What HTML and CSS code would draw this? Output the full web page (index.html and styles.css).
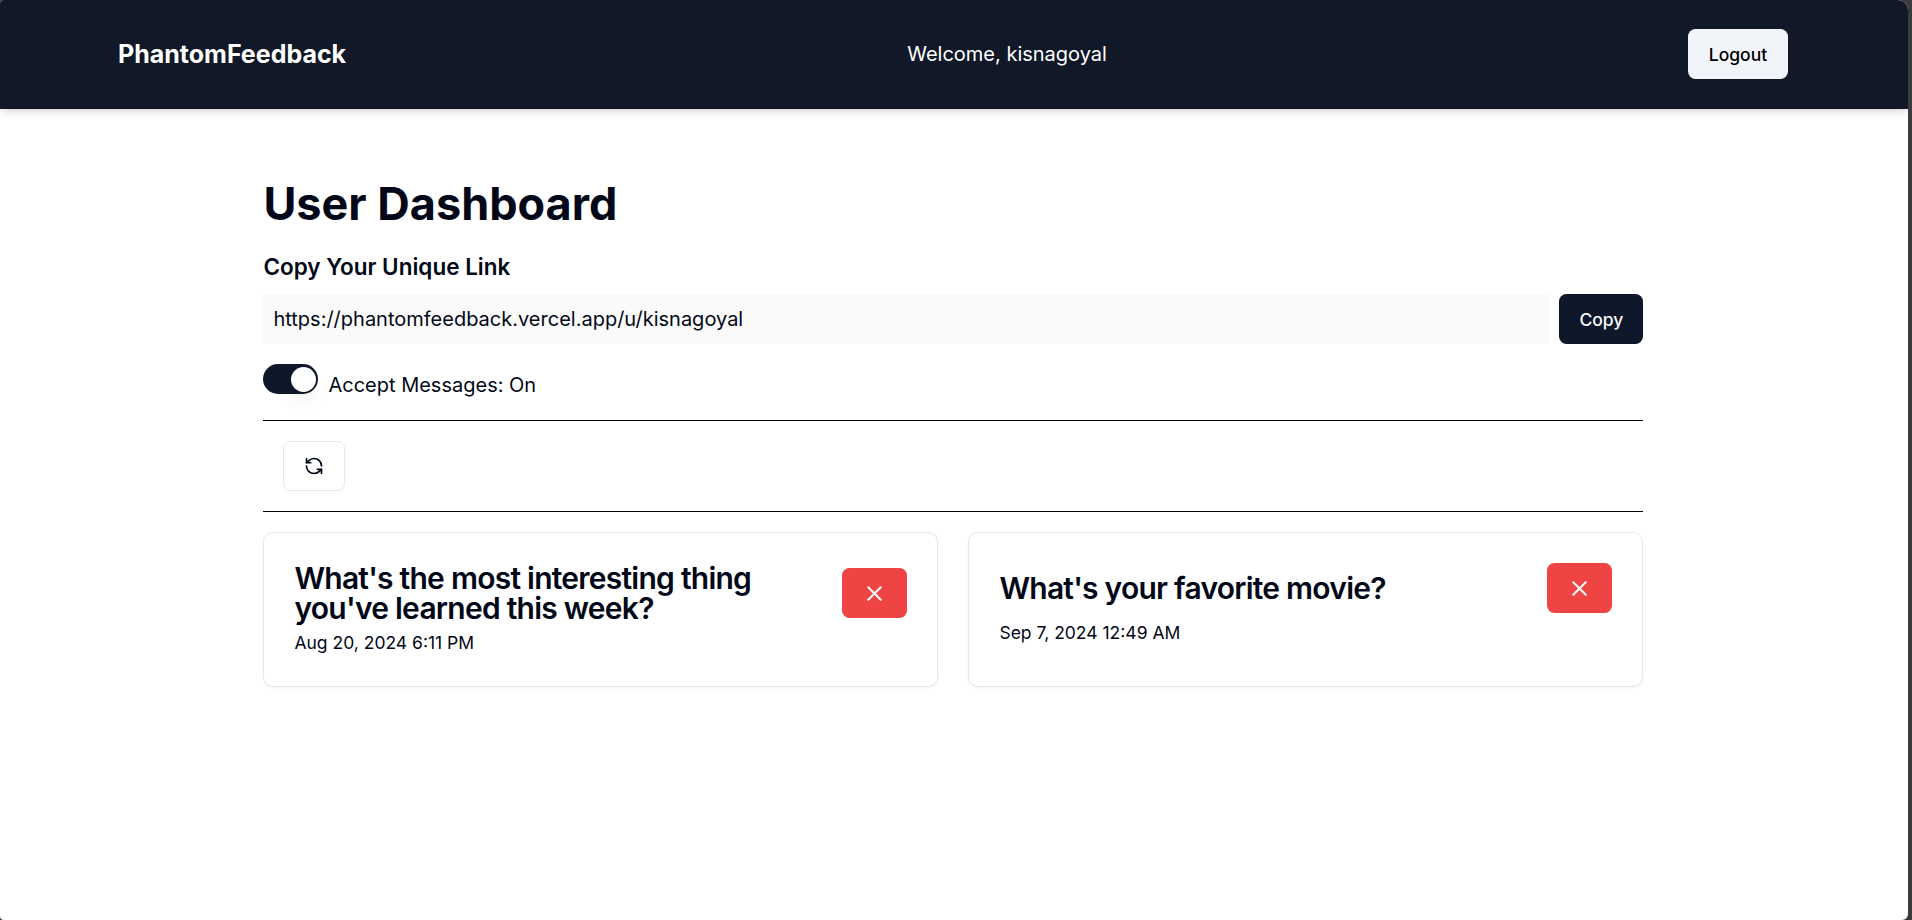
FILE: index.html
```html
<!DOCTYPE html>
<html lang="en">
<head>
<meta charset="utf-8">
<title>PhantomFeedback</title>
<link rel="stylesheet" href="styles.css">
</head>
<body>
<div class="page">
  <nav class="nav">
    <div class="nav-inner">
      <a class="brand">PhantomFeedback</a>
      <span class="welcome">Welcome, kisnagoyal</span>
      <button class="btn btn-light">Logout</button>
    </div>
  </nav>
  <main class="dashboard">
    <h1 class="title">User Dashboard</h1>
    <section>
      <h2 class="subtitle">Copy Your Unique Link</h2>
      <div class="link-row">
        <input class="link-input" type="text" value="https://phantomfeedback.vercel.app/u/kisnagoyal" disabled>
        <button class="btn btn-dark">Copy</button>
      </div>
    </section>
    <div class="switch-row">
      <button class="switch" role="switch" aria-checked="true" aria-label="Accept messages"><span class="thumb"></span></button>
      <span class="switch-label">Accept Messages: On</span>
    </div>
    <div class="toolbar">
      <button class="btn btn-outline" aria-label="Refresh">
        <svg class="icon" viewBox="0 0 24 24"><path d="M21 12a9 9 0 0 0-9-9 9.75 9.75 0 0 0-6.74 2.74L3 8"/><path d="M3 3v5h5"/><path d="M3 12a9 9 0 0 0 9 9 9.75 9.75 0 0 0 6.74-2.74L21 16"/><path d="M16 16h5v5"/></svg>
      </button>
    </div>
    <div class="cards">
      <article class="card">
        <div class="card-head">
          <h3 class="card-title">What's the most interesting thing you've learned this week?</h3>
          <button class="btn btn-delete" aria-label="Delete"><svg class="icon icon-x" viewBox="0 0 24 24"><path d="M18 6 6 18"/><path d="m6 6 12 12"/></svg></button>
        </div>
        <div class="date">Aug 20, 2024 6:11 PM</div>
      </article>
      <article class="card">
        <div class="card-head">
          <h3 class="card-title">What's your favorite movie?</h3>
          <button class="btn btn-delete" aria-label="Delete"><svg class="icon icon-x" viewBox="0 0 24 24"><path d="M18 6 6 18"/><path d="m6 6 12 12"/></svg></button>
        </div>
        <div class="date">Sep 7, 2024 12:49 AM</div>
      </article>
    </div>
  </main>
</div>
</body>
</html>
```
FILE: styles.css
```css
* { box-sizing: border-box; margin: 0; padding: 0; }
html { background: #3b3b3b; }
body {
  height: 920px;
  overflow: hidden;
  font: 400 20px/30px Inter, sans-serif;
  color: #020817;
}
.page {
  width: 1908px;
  height: 920px;
  padding-right: 1.2px;
  overflow: hidden;
  background: #fff;
  border-radius: 4px 10px 6px 4px;
}
.nav {
  width: 1908px;
  height: 109px;
  padding: 29px 120px 30px 118px;
  background: #111827;
  color: #fff;
  box-shadow: 0 5px 7.5px -1px rgba(0, 0, 0, .1), 0 2.5px 5px -2.5px rgba(0, 0, 0, .1);
}
.nav-inner { display: flex; align-items: center; justify-content: space-between; }
.brand { font-size: 25px; line-height: 35px; font-weight: 700; }
.welcome { margin-right: 20px; }
.btn {
  display: inline-flex;
  align-items: center;
  justify-content: center;
  flex: none;
  height: 50px;
  padding: 0 20px;
  border: 0;
  border-radius: 7.5px;
  font: 500 17.5px/25px Inter, sans-serif;
}
.btn-light { width: 100px; background: #f1f5f9; color: #000; }
.btn-dark { width: 84px; background: #0f172a; color: #f8fafc; }
.btn-outline { width: 62px; border: 1px solid #e2e8f0; background: #fff; color: #020817; }
.btn-delete { width: 65px; background: #ef4444; color: #f8fafc; }
.icon {
  flex: none;
  width: 20px;
  height: 20px;
  fill: none;
  stroke: currentColor;
  stroke-width: 2;
  stroke-linecap: round;
  stroke-linejoin: round;
}
.icon-x { width: 25px; height: 25px; }
.dashboard { width: 1380px; margin: 70px auto 0; }
.title { margin-bottom: 20px; font-size: 45px; line-height: 50px; font-weight: 700; }
.subtitle { margin-bottom: 10px; font-size: 22.5px; line-height: 35px; font-weight: 600; }
.link-row { display: flex; gap: 10px; }
.link-input {
  flex: 1;
  height: 50px;
  padding: 0 10px;
  border: 0;
  background: #fafafa;
  color: #020817;
  font: 400 20px/30px Inter, sans-serif;
}
.switch-row { display: flex; gap: 10px; height: 36px; margin: 20px 0; }
.switch {
  display: flex;
  align-items: center;
  justify-content: flex-end;
  width: 55px;
  height: 30px;
  padding: 0 2.5px;
  border: 0;
  border-radius: 15px;
  background: #0f172a;
}
.thumb {
  width: 25px;
  height: 25px;
  border-radius: 50%;
  background: #fff;
  box-shadow: 0 12.5px 19px -4px rgba(0, 0, 0, .1), 0 5px 7.5px -5px rgba(0, 0, 0, .1);
}
.switch-label { align-self: flex-end; }
.toolbar {
  height: 92px;
  padding: 20px;
  border: solid #000;
  border-width: 1px 0;
}
.cards { display: grid; grid-template-columns: 1fr 1fr; gap: 30px; margin-top: 20px; }
.card {
  height: 155px;
  padding: 30px;
  border: 1px solid #e2e8f0;
  border-radius: 10px;
  background: #fff;
  box-shadow: 0 1px 2.5px rgba(0, 0, 0, .05);
}
.card-head { display: flex; align-items: center; justify-content: space-between; }
.card-title {
  max-width: 500px;
  font-size: 30px;
  line-height: 30px;
  font-weight: 600;
  letter-spacing: -.75px;
}
.date { margin-top: 7px; font-size: 17.5px; line-height: 25px; }
```
